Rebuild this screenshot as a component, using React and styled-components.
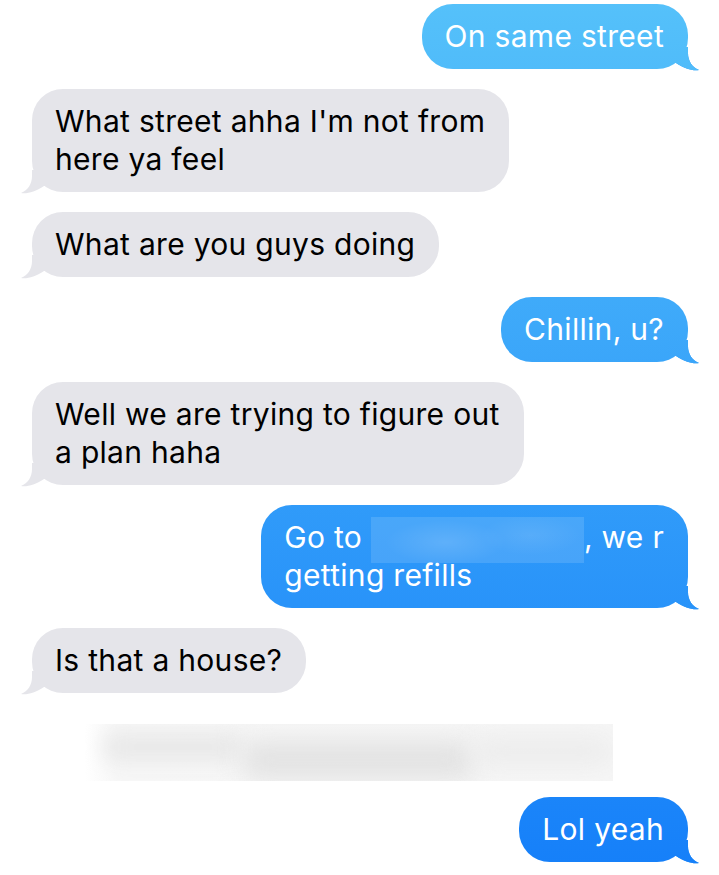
import React from "react";
import styled, { createGlobalStyle, css } from "styled-components";

const GlobalStyle = createGlobalStyle`
  html, body {
    margin: 0;
    padding: 0;
    background: #ffffff;
  }
  body {
    font-family: Inter, "Liberation Sans", Arial, sans-serif;
    -webkit-font-smoothing: antialiased;
  }
`;

const blueFill = css`
  background-color: #2a96fb;
  background-image: linear-gradient(to bottom, #55c1fa 0px, #157ff9 875px);
  background-attachment: fixed;
  background-size: 100vw 875px;
`;

const Thread = styled.div`
  display: flex;
  flex-direction: column;
  gap: 20px;
  padding: 4px 31px 12px 32px;
  box-sizing: border-box;
  width: 719px;
  min-height: 875px;
`;

const Bubble = styled.div`
  position: relative;
  align-self: ${(p) => (p.$me ? "flex-end" : "flex-start")};
  padding: 13px 24px 14px 23px;
  border-radius: 31px;
  font-size: 30px;
  line-height: 38px;
  letter-spacing: 0.3px;
  white-space: nowrap;
  color: ${(p) => (p.$me ? "#ffffff" : "#000000")};
  ${(p) => (p.$me ? blueFill : "background: #e5e5ea;")}

  &::after {
    content: "";
    position: absolute;
    bottom: -2px;
    width: 32px;
    height: 24px;
    ${(p) => (p.$me ? blueFill : "background: #e5e5ea;")}
    ${(p) =>
      p.$me
        ? css`
            right: -12px;
            clip-path: path("M0 0 L20 0 L20 6 C20 14 24 20 31 23 C25 24 17 22 8 16 L0 16 Z");
          `
        : css`
            left: -12px;
            clip-path: path("M32 0 L12 0 L12 6 C12 14 8 20 1 23 C7 24 15 22 24 16 L32 16 Z");
          `}
  }
`;

const Hidden = styled.span`
  position: relative;
  display: inline-block;
  vertical-align: top;
  width: ${(p) => p.$w}px;
  height: 38px;

  &::before {
    content: "";
    position: absolute;
    left: 0;
    right: 0;
    top: -1px;
    bottom: -7px;
    background:
      radial-gradient(ellipse 60px 22px at 35% 55%, rgba(255, 255, 255, 0.12), transparent),
      radial-gradient(ellipse 50px 20px at 75% 40%, rgba(255, 255, 255, 0.08), transparent),
      rgba(255, 255, 255, 0.13);
  }
`;

const Redacted = styled.div`
  align-self: flex-start;
  display: flex;
  align-items: flex-start;
  margin: 11px 0 -4px 53px;
  padding: 6px 10px 0 18px;
  box-sizing: border-box;
  width: 528px;
  height: 57px;
  overflow: hidden;
  background: linear-gradient(to right, #ffffff 0%, #f7f7f7 6%, #f6f6f6 100%);
`;

const Smudge = styled.div`
  flex: 0 0 ${(p) => p.$w}px;
  height: ${(p) => p.$h}px;
  margin-top: ${(p) => p.$top}px;
  border-radius: 12px;
  background: ${(p) => p.$c};
  filter: blur(${(p) => p.$b}px);
`;

const messages = [
  { me: true, text: "On same street" },
  { me: false, text: ["What street ahha I'm not from", "here ya feel"] },
  { me: false, text: "What are you guys doing" },
  { me: true, text: "Chillin, u?" },
  { me: false, text: ["Well we are trying to figure out", "a plan haha"] },
  { me: true, go: true },
  { me: false, text: "Is that a house?" },
  { blur: true },
  { me: true, text: "Lol yeah" },
];

const App = () => {
  return (
    <>
      <GlobalStyle />
      <Thread>
        {messages.map((m, i) => {
          if (m.blur) {
            return (
              <Redacted key={i}>
                <Smudge $top={2} $w={140} $h={30} $c="#e9e9e9" $b={10} />
                <Smudge $top={10} $w={230} $h={40} $c="#e3e3e3" $b={12} />
                <Smudge $top={6} $w={140} $h={30} $c="#ececec" $b={12} />
              </Redacted>
            );
          }
          if (m.go) {
            return (
              <Bubble key={i} $me>
                Go to <Hidden $w={213} />, we r
                <br />
                getting refills
              </Bubble>
            );
          }
          const lines = Array.isArray(m.text) ? m.text : [m.text];
          return (
            <Bubble key={i} $me={m.me}>
              {lines.map((l, j) => (
                <React.Fragment key={j}>
                  {j > 0 && <br />}
                  {l}
                </React.Fragment>
              ))}
            </Bubble>
          );
        })}
      </Thread>
    </>
  );
};

export default App;
